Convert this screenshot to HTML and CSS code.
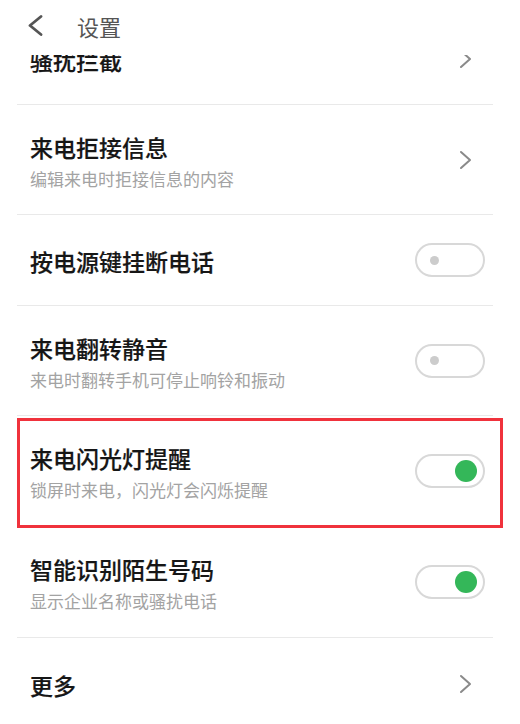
FILE: index.html
```html
<!DOCTYPE html>
<html lang="zh-CN">
<head>
<meta charset="utf-8">
<title>设置</title>
<link rel="stylesheet" href="styles.css">
</head>
<body>
<div class="page">
  <header class="topbar">
    <svg class="back" width="17" height="21" viewBox="0 0 17 21"><path d="M14 1.5 L3 10.5 L14 19.5" fill="none" stroke="#555" stroke-width="2.8" stroke-linecap="round" stroke-linejoin="round"/></svg>
    <span class="topbar-title">设置</span>
  </header>
  <main class="viewport">
    <div class="list">
      <div class="row row-single">
        <div class="text"><div class="title">骚扰拦截</div></div>
        <svg class="chev" width="13" height="20" viewBox="0 0 13 20"><path d="M2 2 L11 10 L2 18" fill="none" stroke="#8a8a8a" stroke-width="2" stroke-linecap="round" stroke-linejoin="round"/></svg>
      </div>
      <div class="row">
        <div class="text"><div class="title">来电拒接信息</div><div class="sub">编辑来电时拒接信息的内容</div></div>
        <svg class="chev" width="13" height="20" viewBox="0 0 13 20"><path d="M2 2 L11 10 L2 18" fill="none" stroke="#8a8a8a" stroke-width="2" stroke-linecap="round" stroke-linejoin="round"/></svg>
      </div>
      <div class="row row-single">
        <div class="text"><div class="title">按电源键挂断电话</div></div>
        <span class="toggle"><span class="knob-off"></span></span>
      </div>
      <div class="row">
        <div class="text"><div class="title">来电翻转静音</div><div class="sub">来电时翻转手机可停止响铃和振动</div></div>
        <span class="toggle"><span class="knob-off"></span></span>
      </div>
      <div class="row row-marked">
        <div class="text"><div class="title">来电闪光灯提醒</div><div class="sub">锁屏时来电，闪光灯会闪烁提醒</div></div>
        <span class="toggle toggle-on"><span class="knob-on"></span></span>
        <span class="mark"></span>
      </div>
      <div class="row row-tall">
        <div class="text"><div class="title">智能识别陌生号码</div><div class="sub">显示企业名称或骚扰电话</div></div>
        <span class="toggle toggle-on"><span class="knob-on"></span></span>
      </div>
      <div class="row row-single row-last">
        <div class="text"><div class="title">更多</div></div>
        <svg class="chev" width="13" height="20" viewBox="0 0 13 20"><path d="M2 2 L11 10 L2 18" fill="none" stroke="#8a8a8a" stroke-width="2" stroke-linecap="round" stroke-linejoin="round"/></svg>
      </div>
    </div>
  </main>
</div>
</body>
</html>
```

FILE: styles.css
```css
* { box-sizing: border-box; }
html, body {
  margin: 0;
  padding: 0;
  background: #ffffff;
}
body {
  font-family: "Noto Sans CJK SC", "Noto Sans", sans-serif;
  width: 520px;
  height: 724px;
  overflow: hidden;
}
.page {
  display: flex;
  flex-direction: column;
  height: 724px;
}
.topbar {
  height: 55px;
  flex: none;
  display: flex;
  align-items: flex-start;
  padding: 15px 0 0 27px;
  background: #fff;
}
.back {
  display: block;
}
.topbar-title {
  margin-left: 33px;
  font-size: 22px;
  line-height: 22px;
  color: #555555;
  font-weight: 400;
}
.viewport {
  flex: 1;
  overflow: hidden;
}
.list {
  margin-top: -41px;
}
.row {
  position: relative;
  display: flex;
  align-items: center;
  height: 110px;
  margin: 0 27px 0 17px;
  padding: 0 8px 0 13px;
  border-bottom: 1px solid #e9e9e9;
}
.row-single { height: 91px; }
.row-tall { height: 112px; }
.row-last { border-bottom: none; }
.text {
  flex: 1;
  display: flex;
  flex-direction: column;
  padding-top: 2px;
}
.title {
  font-size: 23px;
  line-height: 30px;
  color: #161616;
  font-weight: 500;
  -webkit-text-stroke: 0.2px #161616;
}
.sub {
  font-size: 17px;
  line-height: 22px;
  margin-top: 6px;
  color: #a3a3a3;
}
.chev {
  display: block;
  margin-right: 13px;
}
.toggle {
  position: relative;
  display: flex;
  align-items: center;
  width: 70px;
  height: 34px;
  border: 2px solid #d8d8d8;
  border-radius: 17px;
  padding: 0 0 0 13px;
}
.toggle-on {
  justify-content: flex-end;
  padding: 0 6px 0 0;
}
.knob-off {
  width: 9px;
  height: 9px;
  border-radius: 50%;
  background: #cccccc;
}
.knob-on {
  width: 22px;
  height: 22px;
  border-radius: 50%;
  background: #34b759;
}
.mark {
  position: absolute;
  left: 0;
  right: -10px;
  top: 2px;
  bottom: -3px;
  border: 3px solid #f0323c;
  pointer-events: none;
}
```
